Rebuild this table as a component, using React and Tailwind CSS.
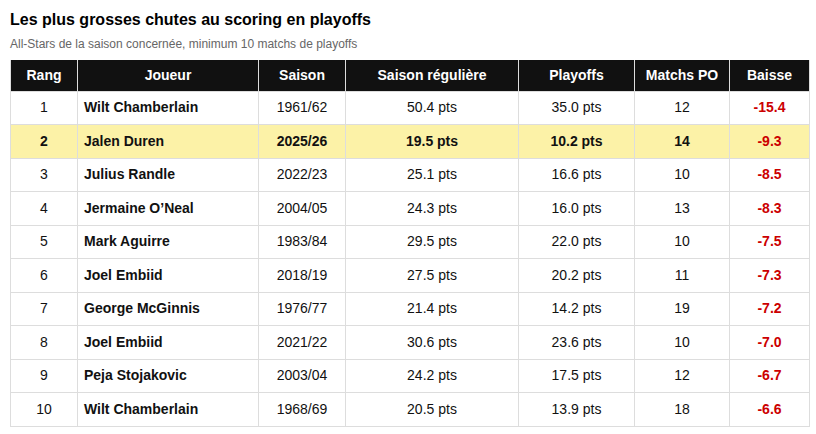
const rows = [
  [1, "Wilt Chamberlain", "1961/62", "50.4 pts", "35.0 pts", 12, "-15.4"],
  [2, "Jalen Duren", "2025/26", "19.5 pts", "10.2 pts", 14, "-9.3"],
  [3, "Julius Randle", "2022/23", "25.1 pts", "16.6 pts", 10, "-8.5"],
  [4, "Jermaine O’Neal", "2004/05", "24.3 pts", "16.0 pts", 13, "-8.3"],
  [5, "Mark Aguirre", "1983/84", "29.5 pts", "22.0 pts", 10, "-7.5"],
  [6, "Joel Embiid", "2018/19", "27.5 pts", "20.2 pts", 11, "-7.3"],
  [7, "George McGinnis", "1976/77", "21.4 pts", "14.2 pts", 19, "-7.2"],
  [8, "Joel Embiid", "2021/22", "30.6 pts", "23.6 pts", 10, "-7.0"],
  [9, "Peja Stojakovic", "2003/04", "24.2 pts", "17.5 pts", 12, "-6.7"],
  [10, "Wilt Chamberlain", "1968/69", "20.5 pts", "13.9 pts", 18, "-6.6"],
];

const heads = ["Rang", "Joueur", "Saison", "Saison régulière", "Playoffs", "Matchs PO", "Baisse"];
const widths = ["w-[67px]", "w-[181px]", "w-[87px]", "w-[173px]", "w-[116px]", "w-[95px]", "w-[80px]"];

export default function App() {
  return (
    <div className="bg-white w-[816px] h-[434px] px-[10px] pt-[9px] font-['Liberation_Sans',Arial,sans-serif] text-[#111]">
      <h1 className="text-[16px] font-bold leading-[22px] text-black">Les plus grosses chutes au scoring en playoffs</h1>
      <p className="text-[12px] leading-[16px] text-[#666] mt-[5px]">All-Stars de la saison concernée, minimum 10 matchs de playoffs</p>
      <table className="mt-[8px] w-[799px] border-collapse table-fixed text-[14px]">
        <thead>
          <tr className="bg-[#111] text-white h-[31px]">
            {heads.map((h, i) => (
              <th key={h} className={`${widths[i]} border-x border-[#ddd] font-bold text-center`}>{h}</th>
            ))}
          </tr>
        </thead>
        <tbody>
          {rows.map((r) => {
            const hl = r[0] === 2;
            return (
              <tr key={r[0]} className={`h-[33.5px] ${hl ? "bg-[#fcf2a7] font-bold" : "bg-white"}`}>
                <td className="border border-[#ddd] text-center">{r[0]}</td>
                <td className="border border-[#ddd] pl-[6px] font-bold">{r[1]}</td>
                <td className="border border-[#ddd] text-center">{r[2]}</td>
                <td className="border border-[#ddd] text-center">{r[3]}</td>
                <td className="border border-[#ddd] text-center">{r[4]}</td>
                <td className="border border-[#ddd] text-center">{r[5]}</td>
                <td className="border border-[#ddd] text-center font-bold text-[#c00]">{r[6]}</td>
              </tr>
            );
          })}
        </tbody>
      </table>
    </div>
  );
}
